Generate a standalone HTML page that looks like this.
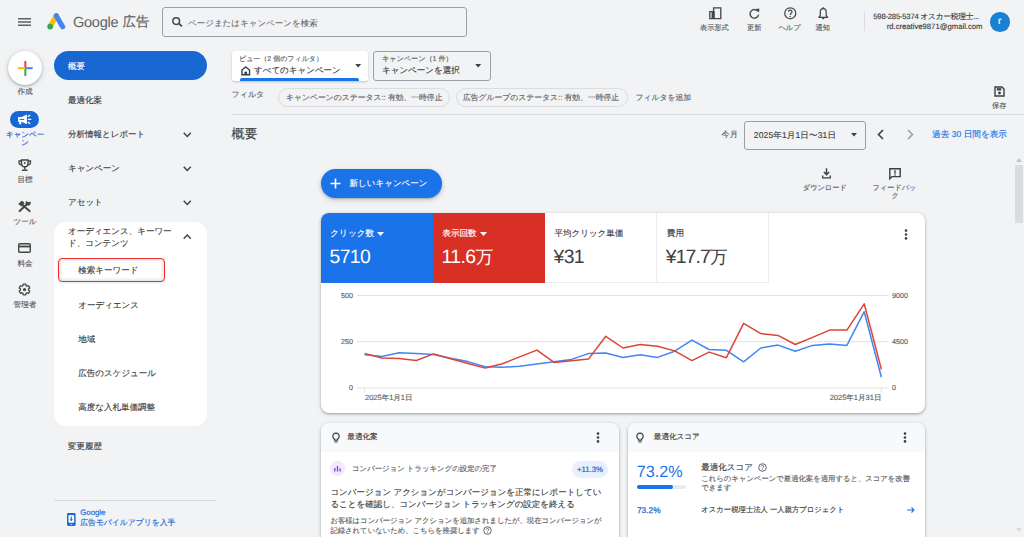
<!DOCTYPE html>
<html><head><meta charset="utf-8">
<style>
*{box-sizing:border-box;margin:0;padding:0}
html,body{width:1024px;height:537px;overflow:hidden;background:#f1f3f4;text-rendering:geometricPrecision;font-family:"Liberation Sans",sans-serif;color:#3c4043}
.a{position:absolute;white-space:nowrap;line-height:1;-webkit-text-stroke:0.15px currentColor}
.rl{font-size:7.6px;color:#5f6368;text-align:center;width:50px;left:0}
.nav{font-size:8.5px;color:#3c4043;left:68px}
.ic{position:absolute;overflow:visible}
.tk{font-size:7.2px;color:#5f6368}
.card{position:absolute;background:#fff;border-radius:8px;box-shadow:0 1px 2px rgba(60,64,67,.3),0 1px 3px 1px rgba(60,64,67,.15)}
</style></head><body>
<!-- ===== top bar ===== -->
<svg class="ic" style="left:18px;top:18px" width="13" height="8" viewBox="0 0 13 8"><rect y="0" width="13" height="1.5" fill="#5f6368"/><rect y="3.25" width="13" height="1.5" fill="#5f6368"/><rect y="6.5" width="13" height="1.5" fill="#5f6368"/></svg>
<svg class="ic" style="left:47px;top:13px" width="19" height="17" viewBox="0 0 19 17"><path d="M9.3 2.8 L3.6 12.6" stroke="#fbbc04" stroke-width="5.2" stroke-linecap="round"/><path d="M9.3 2.8 L15.6 13.8" stroke="#4285f4" stroke-width="5.2" stroke-linecap="round"/><circle cx="3.2" cy="13.6" r="2.9" fill="#34a853"/></svg>
<div class="a" style="-webkit-text-stroke:0;left:73px;top:15.6px;font-size:14.6px;color:#5f6368;letter-spacing:-0.3px">Google</div>
<div class="a" style="left:122.6px;top:14.6px;font-size:13.4px;color:#5f6368">広告</div>
<div class="a" style="left:162px;top:7.4px;width:305px;height:29.3px;border:1px solid #9aa0a6;border-radius:3px"></div>
<svg class="ic" style="left:171.8px;top:16.9px" width="10.5" height="10" viewBox="0 0 10.5 10"><circle cx="4.2" cy="4.1" r="3.35" fill="none" stroke="#444746" stroke-width="1.5"/><path d="M6.7 6.5 L10 9.4" stroke="#444746" stroke-width="1.7"/></svg>
<div class="a" style="left:188px;top:19px;font-size:8.5px;-webkit-text-stroke:0.05px;color:#5f6368">ページまたはキャンペーンを検索</div>

<!-- right icons -->
<svg class="ic" style="left:708.5px;top:7px" width="13" height="12.5" viewBox="0 0 13 12.5"><path d="M0.8 4.6 H4.6 V0.8 H11.8 V11.7 H0.8z" fill="none" stroke="#444746" stroke-width="1.3"/><rect x="2.6" y="4.6" width="2.6" height="7" fill="#444746"/><path d="M5.2 4.6 V11.7" stroke="#444746" stroke-width="1.1"/></svg>
<div class="a tk" style="left:700px;top:23.6px">表示形式</div>
<svg class="ic" style="left:748.8px;top:7.8px" width="11" height="11" viewBox="0 0 11 11"><path d="M8.9 3.4 A4.3 4.3 0 1 0 9.6 6.6" fill="none" stroke="#444746" stroke-width="1.35"/><path d="M6.6 0.9 L10.3 0.6 L10.1 4.4 Z" fill="#444746"/></svg>
<div class="a tk" style="left:747px;top:23.6px">更新</div>
<svg class="ic" style="left:783.6px;top:6.8px" width="12.5" height="12.5" viewBox="0 0 12.5 12.5"><circle cx="6.25" cy="6.25" r="5.5" fill="none" stroke="#444746" stroke-width="1.25"/><path d="M4.5 4.9 A1.75 1.75 0 1 1 7 6.4 C6.4 6.8 6.25 7.1 6.25 7.9" fill="none" stroke="#444746" stroke-width="1.2"/><circle cx="6.25" cy="9.4" r="0.75" fill="#444746"/></svg>
<div class="a tk" style="left:778.5px;top:23.6px">ヘルプ</div>
<svg class="ic" style="left:817.8px;top:7.2px" width="10.5" height="12.5" viewBox="0 0 10.5 12.5"><path d="M5.25 1.6 C3.3 1.6 2.3 3.2 2.3 5 V8.7 L1 10 V10.3 H9.5 V10 L8.2 8.7 V5 C8.2 3.2 7.2 1.6 5.25 1.6z" fill="none" stroke="#444746" stroke-width="1.25" stroke-linejoin="round"/><path d="M4 11.1 A1.25 1.25 0 0 0 6.5 11.1z" fill="#444746"/><rect x="4.6" y="0.2" width="1.3" height="1.6" fill="#444746"/></svg>
<div class="a tk" style="left:815.5px;top:23.6px">通知</div>
<div class="a" style="left:864px;top:12px;width:1px;height:19px;background:#dadce0"></div>
<div class="a" style="left:779px;width:200px;text-align:right;top:13.2px;font-size:7.7px;letter-spacing:-0.22px;color:#3c4043">598-285-5374 オスカー税理士...</div>
<div class="a" style="left:782.5px;width:200px;text-align:right;top:23px;font-size:7.7px;color:#3c4043">rd.creative9871@gmail.com</div>
<div class="a" style="left:990px;top:12px;width:19.5px;height:19.5px;border-radius:50%;background:#1b7fd4;color:#fff;font-size:10px;text-align:center;line-height:19.5px">r</div>

<!-- ===== left rail ===== -->
<div class="a" style="left:8px;top:51px;width:34px;height:34px;border-radius:50%;background:#fff;box-shadow:0 1px 2px rgba(60,64,67,.3),0 1px 4px 1px rgba(60,64,67,.15)"></div>
<svg class="ic" style="left:17.7px;top:60.7px" width="14.7" height="15" viewBox="0 0 14.7 15"><rect x="6.35" y="0" width="2" height="7.4" fill="#ea4335"/><rect x="6.35" y="7.4" width="2" height="7.6" fill="#34a853"/><rect x="0" y="6.2" width="7.35" height="2" fill="#fbbc04"/><rect x="7.35" y="6.2" width="7.35" height="2" fill="#4285f4"/></svg>
<div class="a rl" style="top:87.8px">作成</div>
<div class="a" style="left:10px;top:110.5px;width:29px;height:17px;border-radius:9px;background:#1967d2"></div>
<svg class="ic" style="left:17px;top:114px" width="15" height="11" viewBox="0 0 15 11"><path d="M1 3 H4.6 L9.9 0.6 V10.2 L4.6 7.8 H4.3 V10.3 H2.2 V7.8 H1z" fill="#fff"/><path d="M2.6 5.4 H7.2" stroke="#1967d2" stroke-width="1"/><path d="M11.2 2.6 L12.9 1.3 M11.4 5.4 H13.8 M11.2 8.2 L12.9 9.5" stroke="#fff" stroke-width="1.2" stroke-linecap="round"/></svg>
<div class="a rl" style="top:130.8px;color:#1967d2;white-space:normal;line-height:8px;width:50px;padding:0 5px">キャンペーン</div>
<svg class="ic" style="left:18px;top:159px" width="13.5" height="12" viewBox="0 0 13.5 12"><path d="M3.5 1 H10 V4.5 A3.25 3.25 0 0 1 3.5 4.5z" fill="none" stroke="#444746" stroke-width="1.4"/><path d="M3.5 2 H1 V3.5 A2.5 2.5 0 0 0 3.6 5.8 M10 2 H12.5 V3.5 A2.5 2.5 0 0 1 9.9 5.8" fill="none" stroke="#444746" stroke-width="1.3"/><path d="M6.75 7.8 V10.3 M4 11.2 H9.5" stroke="#444746" stroke-width="1.4"/><circle cx="6.75" cy="4" r="0.9" fill="#444746"/></svg>
<div class="a rl" style="top:176px">目標</div>
<svg class="ic" style="left:17px;top:200px" width="14" height="12" viewBox="0 0 14 12"><path d="M11.3 3 L2.6 11.1" stroke="#444746" stroke-width="2" stroke-linecap="round"/><path d="M6.3 5.8 L12.6 11.1" stroke="#444746" stroke-width="2" stroke-linecap="round"/><path d="M1.2 4 L4.6 0.7 L6.2 1.4 L7.6 3.4 L4.6 6.6z" fill="#444746"/><path d="M13 1.3 A2.5 2.5 0 1 1 9.7 1 L11.2 2.6 L12.3 2.4z" fill="#444746"/></svg>
<div class="a rl" style="top:218px">ツール</div>
<svg class="ic" style="left:18px;top:243px" width="13" height="10" viewBox="0 0 13 10"><rect x="0.7" y="0.7" width="11.6" height="8.6" rx="1" fill="none" stroke="#444746" stroke-width="1.4"/><rect x="0.7" y="2.6" width="11.6" height="1.8" fill="#444746"/></svg>
<div class="a rl" style="top:259.5px">料金</div>
<svg class="ic" style="left:18px;top:283px" width="13" height="13" viewBox="0 0 24 24"><path d="M19.4 13c.04-.3.06-.65.06-1s-.02-.7-.06-1l2.1-1.65c.2-.15.25-.42.13-.64l-2-3.46c-.12-.22-.39-.3-.61-.22l-2.49 1c-.52-.4-1.08-.73-1.69-.98l-.38-2.65C14.46 2.18 14.25 2 14 2h-4c-.25 0-.46.18-.49.42l-.38 2.65c-.61.25-1.17.59-1.69.98l-2.49-1c-.23-.09-.49 0-.61.22l-2 3.46c-.13.22-.07.49.12.64L4.57 11c-.04.32-.07.66-.07 1s.03.68.07 1l-2.11 1.65c-.19.15-.24.42-.12.64l2 3.46c.12.22.39.3.61.22l2.49-1c.52.4 1.08.73 1.69.98l.38 2.65c.03.24.24.42.49.42h4c.25 0 .46-.18.49-.42l.38-2.65c.61-.25 1.17-.59 1.69-.98l2.49 1c.23.09.49 0 .61-.22l2-3.46c.12-.22.07-.49-.12-.64L19.4 13z" fill="none" stroke="#444746" stroke-width="2.4"/><circle cx="12" cy="12" r="3" fill="#444746"/></svg>
<div class="a rl" style="top:300.5px">管理者</div>

<!-- ===== nav ===== -->
<div class="a" style="left:54px;top:51px;width:153px;height:29.4px;border-radius:15px;background:#1967d2"></div>
<div class="a nav" style="top:61.9px;color:#fff">概要</div>
<div class="a nav" style="top:95.9px">最適化案</div>
<div class="a nav" style="top:130.0px">分析情報とレポート</div>
<svg class="ic" style="left:182.5px;top:131.5px" width="8.5" height="5.5" viewBox="0 0 8.5 5.5"><path d="M0.7 0.7 L4.25 4.4 L7.8 0.7" fill="none" stroke="#3c4043" stroke-width="1.4"/></svg>
<div class="a nav" style="top:164.4px">キャンペーン</div>
<svg class="ic" style="left:182.5px;top:165.7px" width="8.5" height="5.5" viewBox="0 0 8.5 5.5"><path d="M0.7 0.7 L4.25 4.4 L7.8 0.7" fill="none" stroke="#3c4043" stroke-width="1.4"/></svg>
<div class="a nav" style="top:198.2px">アセット</div>
<svg class="ic" style="left:182.5px;top:199.5px" width="8.5" height="5.5" viewBox="0 0 8.5 5.5"><path d="M0.7 0.7 L4.25 4.4 L7.8 0.7" fill="none" stroke="#3c4043" stroke-width="1.4"/></svg>
<div class="a" style="left:54px;top:222px;width:153px;height:204px;border-radius:12px;background:#fff"></div>
<div class="a nav" style="top:224.5px;line-height:12px">オーディエンス、キーワー<br>ド、コンテンツ</div>
<svg class="ic" style="left:182.5px;top:233.8px" width="8.5" height="5.5" viewBox="0 0 8.5 5.5"><path d="M0.7 4.8 L4.25 1.1 L7.8 4.8" fill="none" stroke="#3c4043" stroke-width="1.4"/></svg>
<div class="a" style="left:57.8px;top:258.2px;width:107.5px;height:23.6px;border:1.8px solid #e8312f;border-radius:4px;box-shadow:inset 0 0 4px rgba(0,0,0,.22),0 1px 2px rgba(0,0,0,.1)"></div>
<div class="a nav" style="left:78.3px;top:266.2px">検索キーワード</div>
<div class="a nav" style="left:78.3px;top:301.0px">オーディエンス</div>
<div class="a nav" style="left:78.3px;top:335.1px">地域</div>
<div class="a nav" style="left:78.3px;top:368.6px">広告のスケジュール</div>
<div class="a nav" style="left:78.3px;top:402.9px">高度な入札単価調整</div>
<div class="a nav" style="top:442.1px">変更履歴</div>
<div class="a" style="left:54px;top:500px;width:162px;height:1px;background:#dadce0"></div>
<svg class="ic" style="left:66.5px;top:512.7px" width="8.6" height="13" viewBox="0 0 8.6 13"><rect x="0" y="0" width="8.6" height="13" rx="1.4" fill="#1967d2"/><rect x="1.5" y="2.1" width="5.6" height="7.6" fill="#fff"/><rect x="3.3" y="11" width="2" height="0.7" fill="#fff"/><path d="M4.3 3.6 V7.6" stroke="#1967d2" stroke-width="1.1"/><path d="M2.6 6.2 L4.3 8.2 L6 6.2z" fill="#1967d2"/></svg>
<div class="a" style="left:80.3px;top:509.3px;font-size:7.8px;color:#1967d2">Google</div>
<div class="a" style="left:80.3px;top:519.4px;font-size:7.8px;color:#1967d2">広告モバイルアプリを入手</div>

<!-- MAIN -->
<!-- view selectors -->
<div class="a" style="left:231.5px;top:51px;width:136px;height:29.5px;background:#fff;border-radius:3px;box-shadow:0 1px 2px rgba(60,64,67,.25)"></div>
<div class="a" style="left:239px;top:56.2px;font-size:7px;color:#5f6368">ビュー（2 個のフィルタ）</div>
<svg class="ic" style="left:240.5px;top:66px" width="9.5" height="9.5" viewBox="0 0 10 10"><path d="M1 9.2 V4.2 L5 1 L9 4.2 V9.2 Z" fill="none" stroke="#3c4043" stroke-width="1.5"/><rect x="3.6" y="6" width="2.8" height="3.4" fill="#3c4043"/></svg>
<div class="a" style="left:254px;top:66.3px;font-size:8.5px;color:#3c4043">すべてのキャンペーン</div>
<div class="a" style="left:240px;top:77.6px;width:119px;height:3px;background:#1a73e8;border-radius:2px 2px 0 0"></div>
<svg class="ic" style="left:354.6px;top:64px" width="6.4" height="3.4" viewBox="0 0 7 4"><path d="M0 0 H7 L3.5 4z" fill="#3c4043"/></svg>
<div class="a" style="left:372.5px;top:51px;width:118.5px;height:29.5px;border:1px solid #9aa0a6;border-radius:3px"></div>
<div class="a" style="left:382px;top:56.2px;font-size:7.1px;color:#5f6368">キャンペーン（1 件）</div>
<div class="a" style="left:382px;top:66.3px;font-size:8.5px;color:#3c4043">キャンペーンを選択</div>
<svg class="ic" style="left:474.6px;top:64px" width="6.4" height="3.4" viewBox="0 0 7 4"><path d="M0 0 H7 L3.5 4z" fill="#3c4043"/></svg>

<!-- filter row -->
<div class="a" style="left:231.5px;top:91.2px;font-size:8px;color:#5f6368">フィルタ</div>
<div class="a" style="left:278px;top:87.8px;width:172px;height:19px;border:1px solid #dadce0;border-radius:10px"></div>
<div class="a" style="left:286px;top:93.8px;font-size:7.8px;color:#5f6368">キャンペーンのステータス:: 有効、一時停止</div>
<div class="a" style="left:455.5px;top:87.8px;width:172.5px;height:19px;border:1px solid #dadce0;border-radius:10px"></div>
<div class="a" style="left:463px;top:93.8px;font-size:7.8px;color:#5f6368">広告グループのステータス:: 有効、一時停止</div>
<div class="a" style="left:635.5px;top:93.8px;font-size:7.8px;color:#5f6368">フィルタを追加</div>
<svg class="ic" style="left:993.5px;top:86px" width="11" height="11" viewBox="0 0 11 11"><path d="M1 1 H8 L10 3 V10 H1z" fill="none" stroke="#3c4043" stroke-width="1.4"/><rect x="2.8" y="2.2" width="4.5" height="2.2" fill="#3c4043"/><circle cx="5.5" cy="7" r="1.4" fill="#3c4043"/></svg>
<div class="a tk" style="left:992px;top:102px">保存</div>
<div class="a" style="left:231px;top:113.5px;width:793px;height:1px;background:#dadce0"></div>

<!-- heading row -->
<div class="a" style="left:231.5px;top:127px;font-size:13px;color:#3c4043">概要</div>
<div class="a" style="left:721.5px;top:130.9px;font-size:8.2px;color:#5f6368">今月</div>
<div class="a" style="left:743.5px;top:120.5px;width:122.5px;height:29px;border:1px solid #9aa0a6;border-radius:3px"></div>
<div class="a" style="left:753.8px;top:130.5px;font-size:8.5px;letter-spacing:0.15px;color:#3c4043">2025年1月1日〜31日</div>
<svg class="ic" style="left:851px;top:132.8px" width="6" height="3.4" viewBox="0 0 7 4"><path d="M0 0 H7 L3.5 4z" fill="#3c4043"/></svg>
<svg class="ic" style="left:877px;top:129px" width="7" height="11" viewBox="0 0 7 11"><path d="M6 1 L1.5 5.5 L6 10" fill="none" stroke="#3c4043" stroke-width="1.6"/></svg>
<svg class="ic" style="left:907px;top:129px" width="7" height="11" viewBox="0 0 7 11"><path d="M1 1 L5.5 5.5 L1 10" fill="none" stroke="#9aa0a6" stroke-width="1.6"/></svg>
<div class="a" style="left:932px;top:130.2px;font-size:8.65px;color:#1a73e8">過去 30 日間を表示</div>

<!-- scrollbar -->
<svg class="ic" style="left:1016px;top:157.5px" width="6" height="4" viewBox="0 0 6 4"><path d="M0 4 H6 L3 0z" fill="#c4c7c5"/></svg>
<div class="a" style="left:1015px;top:164.7px;width:8px;height:58px;background:#dadce0"></div>
<svg class="ic" style="left:1016px;top:528px" width="6" height="4" viewBox="0 0 6 4"><path d="M0 0 H6 L3 4z" fill="#dadce0"/></svg>

<!-- download/feedback -->
<svg class="ic" style="left:821.5px;top:168.3px" width="9" height="10.5" viewBox="0 0 9 10.5"><path d="M4.5 0.3 V6.6 M1.9 4.1 L4.5 6.7 L7.1 4.1" fill="none" stroke="#3c4043" stroke-width="1.4"/><path d="M0.7 7.6 V9.8 H8.3 V7.6" fill="none" stroke="#3c4043" stroke-width="1.3"/></svg>
<div class="a tk" style="left:802.8px;top:183.8px">ダウンロード</div>
<svg class="ic" style="left:889px;top:167.5px" width="12" height="12" viewBox="0 0 12 12"><path d="M0.8 0.8 H11.2 V8.6 H3 L0.8 10.8z" fill="none" stroke="#3c4043" stroke-width="1.4"/><rect x="5.3" y="2.3" width="1.4" height="3.3" fill="#3c4043"/><rect x="5.3" y="6.3" width="1.4" height="1.3" fill="#3c4043"/></svg>
<div class="a tk" style="left:872.5px;top:184px">フィードバッ</div>
<div class="a tk" style="left:891.5px;top:192.4px">ク</div>

<!-- new campaign button -->
<div class="a" style="left:320.5px;top:169px;width:121px;height:29px;border-radius:15px;background:#1a73e8;box-shadow:0 1px 2px rgba(60,64,67,.3),0 2px 4px 1px rgba(60,64,67,.15)"></div>
<svg class="ic" style="left:330px;top:178.3px" width="11" height="11" viewBox="0 0 11 11"><path d="M5.5 0.5 V10.5 M0.5 5.5 H10.5" stroke="#fff" stroke-width="1.6"/></svg>
<div class="a" style="left:349.6px;top:179.2px;font-size:8.5px;color:#fff">新しいキャンペーン</div>

<!-- main card -->
<div class="card" style="left:320.5px;top:212.5px;width:604.5px;height:200px"></div>
<div class="a" style="left:320.5px;top:212.5px;width:112px;height:70.5px;background:#1a73e8;border-top-left-radius:8px"></div>
<div class="a" style="left:432.5px;top:212.5px;width:112.5px;height:70.5px;background:#d93025"></div>
<div class="a" style="left:545px;top:212.5px;width:111.5px;height:70.5px;border-right:1px solid #e8eaed;border-bottom:1px solid #e8eaed"></div>
<div class="a" style="left:656.5px;top:212.5px;width:112.5px;height:70.5px;border-right:1px solid #e8eaed;border-bottom:1px solid #e8eaed"></div>
<div class="a" style="left:330.3px;top:228.7px;font-size:8.6px;color:#fff">クリック数</div>
<svg class="ic" style="left:377px;top:231.6px" width="7" height="4" viewBox="0 0 7 4"><path d="M0 0 H7 L3.5 4z" fill="#fff"/></svg>
<div class="a" style="left:329.5px;top:247.7px;-webkit-text-stroke:0;font-size:19.4px;letter-spacing:-0.6px;color:#fff">5710</div>
<div class="a" style="left:442.3px;top:228.7px;font-size:8.6px;color:#fff">表示回数</div>
<svg class="ic" style="left:480px;top:231.6px" width="7" height="4" viewBox="0 0 7 4"><path d="M0 0 H7 L3.5 4z" fill="#fff"/></svg>
<div class="a" style="left:441.5px;top:247.7px;-webkit-text-stroke:0;font-size:19.4px;letter-spacing:-0.6px;color:#fff">11.6<span style="font-size:17.8px">万</span></div>
<div class="a" style="left:554.5px;top:228.7px;font-size:8.5px;color:#3c4043">平均クリック単価</div>
<div class="a" style="left:553.5px;top:247.7px;-webkit-text-stroke:0;font-size:19.4px;letter-spacing:-0.6px;color:#3c4043">¥31</div>
<div class="a" style="left:666.8px;top:228.7px;font-size:8.6px;color:#3c4043">費用</div>
<div class="a" style="left:665.8px;top:247.7px;-webkit-text-stroke:0;font-size:19.4px;letter-spacing:-0.6px;color:#3c4043;letter-spacing:-0.9px">¥17.7<span style="font-size:17.8px">万</span></div>
<svg class="ic" style="left:903.5px;top:229px" width="4" height="11" viewBox="0 0 4 11"><circle cx="2" cy="1.6" r="1.3" fill="#3c4043"/><circle cx="2" cy="5.5" r="1.3" fill="#3c4043"/><circle cx="2" cy="9.4" r="1.3" fill="#3c4043"/></svg>

<!-- chart -->
<svg class="ic" style="left:0;top:0" width="1024" height="537" viewBox="0 0 1024 537">
<g stroke="#e0e0e0" stroke-width="1"><path d="M357 295.5 H888.5"/><path d="M357 341.7 H888.5"/><path d="M357 388 H888.5"/><path d="M364.6 388 V393"/><path d="M881.4 388 V393"/></g>
<polyline fill="none" stroke="#4285f4" stroke-width="1.5" stroke-linejoin="round" points="364.6,354.7 381.8,356.6 399.1,352.8 416.3,353.6 433.5,354.5 450.7,358.3 468.0,361.6 485.2,366.8 502.4,367.3 519.6,366.2 536.9,364.0 554.1,361.8 571.3,359.4 588.5,353.6 605.8,353.0 623.0,357.4 640.2,354.7 657.5,357.4 674.7,351.2 691.9,340.1 709.1,349.5 726.4,350.3 743.6,361.8 760.8,348.0 778.0,345.1 795.3,351.2 812.5,345.4 829.7,343.9 846.9,345.4 864.2,311.7 881.4,377.3"/>
<polyline fill="none" stroke="#db4437" stroke-width="1.5" stroke-linejoin="round" points="364.6,353.4 381.8,358.0 399.1,358.6 416.3,360.5 433.5,353.9 450.7,358.8 468.0,363.5 485.2,368.1 502.4,363.8 519.6,356.9 536.9,350.1 554.1,362.4 571.3,360.7 588.5,359.1 605.8,336.3 623.0,348.0 640.2,344.5 657.5,346.2 674.7,350.9 691.9,360.6 709.1,352.1 726.4,357.7 743.6,323.4 760.8,333.6 778.0,335.4 795.3,344.5 812.5,337.4 829.7,330.1 846.9,330.1 864.2,303.8 881.4,369.4"/>
</svg>
<div class="a" style="left:323px;top:291.7px;width:30px;text-align:right;font-size:7.2px;color:#5f6368">500</div>
<div class="a" style="left:323px;top:337.9px;width:30px;text-align:right;font-size:7.2px;color:#5f6368">250</div>
<div class="a" style="left:323px;top:384.2px;width:30px;text-align:right;font-size:7.2px;color:#5f6368">0</div>
<div class="a" style="left:892px;top:291.7px;font-size:7.2px;color:#5f6368">9000</div>
<div class="a" style="left:892px;top:337.9px;font-size:7.2px;color:#5f6368">4500</div>
<div class="a" style="left:892px;top:384.2px;font-size:7.2px;color:#5f6368">0</div>
<div class="a" style="left:365px;top:394px;font-size:7.5px;color:#5f6368">2025年1月1日</div>
<div class="a" style="left:781.4px;width:100px;text-align:right;top:394px;font-size:7.5px;color:#5f6368">2025年1月31日</div>

<!-- bottom cards -->
<div class="card" style="left:320.5px;top:422.5px;width:298px;height:130px;overflow:hidden">
  <div style="position:absolute;left:0;top:0;width:100%;height:29.3px;background:#f8f9fa"></div>
</div>
<svg class="ic" style="left:332.3px;top:432.6px" width="8" height="9.6" viewBox="0 0 8 9.6"><path d="M2.5 7.2 V6.1 A3.2 3.2 0 1 1 5.5 6.1 V7.2 Z" fill="none" stroke="#3c4043" stroke-width="1.2" stroke-linejoin="round"/><rect x="2.4" y="8.4" width="3.2" height="1.1" fill="#3c4043"/></svg>
<div class="a" style="left:347.3px;top:433px;font-size:7.6px;color:#3c4043">最適化案</div>
<svg class="ic" style="left:596px;top:431.5px" width="4" height="11" viewBox="0 0 4 11"><circle cx="2" cy="1.6" r="1.3" fill="#3c4043"/><circle cx="2" cy="5.5" r="1.3" fill="#3c4043"/><circle cx="2" cy="9.4" r="1.3" fill="#3c4043"/></svg>
<div class="a" style="left:330px;top:461.2px;width:15px;height:14.8px;border-radius:50%;background:#f3e8fd"></div>
<svg class="ic" style="left:334.3px;top:466.3px" width="7" height="5.5" viewBox="0 0 7 5.5"><rect x="0.2" y="2" width="1.3" height="3.5" fill="#9334e6"/><rect x="2.85" y="0" width="1.3" height="5.5" fill="#9334e6"/><rect x="5.5" y="2.5" width="1.3" height="3" fill="#9334e6"/></svg>
<div class="a" style="left:352px;top:465.4px;font-size:7.4px;color:#5f6368">コンバージョン トラッキングの設定の完了</div>
<div class="a" style="left:572px;top:460.5px;width:36px;height:17px;border-radius:9px;background:#e8f0fe;color:#1967d2;font-size:7.8px;-webkit-text-stroke:0.2px #1967d2;text-align:center;line-height:17px">+11.3%</div>
<div class="a" style="left:330.4px;top:485.7px;font-size:8.5px;line-height:12.3px;color:#3c4043">コンバージョン アクションがコンバージョンを正常にレポートしてい<br>ることを確認し、コンバージョン トラッキングの設定を終える</div>
<div class="a" style="left:330.4px;top:516.3px;font-size:7.35px;line-height:9.8px;color:#5f6368">お客様はコンバージョン アクションを追加されましたが、現在コンバージョンが<br>記録されていないため、こちらを推奨します</div>
<svg class="ic" style="left:482.5px;top:525.5px" width="9" height="9" viewBox="0 0 9 9"><circle cx="4.5" cy="4.5" r="3.8" fill="none" stroke="#5f6368" stroke-width="1"/><path d="M3.3 3.5 A1.2 1.2 0 1 1 5 4.6 C4.6 4.9 4.5 5.1 4.5 5.6" fill="none" stroke="#5f6368" stroke-width="0.9"/><circle cx="4.5" cy="6.7" r="0.5" fill="#5f6368"/></svg>

<div class="card" style="left:628.2px;top:422.5px;width:296.5px;height:130px;overflow:hidden">
  <div style="position:absolute;left:0;top:0;width:100%;height:29px;background:#f8f9fa"></div>
</div>
<svg class="ic" style="left:636.3px;top:432.6px" width="8" height="9.6" viewBox="0 0 8 9.6"><path d="M2.5 7.2 V6.1 A3.2 3.2 0 1 1 5.5 6.1 V7.2 Z" fill="none" stroke="#3c4043" stroke-width="1.2" stroke-linejoin="round"/><rect x="2.4" y="8.4" width="3.2" height="1.1" fill="#3c4043"/></svg>
<div class="a" style="left:653.8px;top:433px;font-size:7.6px;color:#3c4043">最適化スコア</div>
<svg class="ic" style="left:903.4px;top:431.5px" width="4" height="11" viewBox="0 0 4 11"><circle cx="2" cy="1.6" r="1.3" fill="#3c4043"/><circle cx="2" cy="5.5" r="1.3" fill="#3c4043"/><circle cx="2" cy="9.4" r="1.3" fill="#3c4043"/></svg>
<div class="a" style="left:636.8px;top:463.8px;font-size:16.2px;-webkit-text-stroke:0;color:#1a73e8">73.2%</div>
<div class="a" style="left:637px;top:484.5px;width:48.7px;height:4.4px;border-radius:3px;background:#e8eaed"></div>
<div class="a" style="left:637px;top:484.5px;width:36px;height:4.4px;border-radius:3px;background:#1a73e8"></div>
<div class="a" style="left:701.3px;top:462.7px;font-size:8.5px;color:#3c4043">最適化スコア</div>
<svg class="ic" style="left:758.3px;top:462.5px" width="9" height="9" viewBox="0 0 9 9"><circle cx="4.5" cy="4.5" r="3.8" fill="none" stroke="#5f6368" stroke-width="1"/><path d="M3.3 3.5 A1.2 1.2 0 1 1 5 4.6 C4.6 4.9 4.5 5.1 4.5 5.6" fill="none" stroke="#5f6368" stroke-width="0.9"/><circle cx="4.5" cy="6.7" r="0.5" fill="#5f6368"/></svg>
<div class="a" style="left:701.3px;top:473.6px;font-size:7.35px;line-height:9.8px;color:#5f6368">これらのキャンペーンで最適化案を適用すると、スコアを改善<br>できます</div>
<div class="a" style="left:637px;top:505.6px;font-size:8.3px;-webkit-text-stroke:0.25px #1967d2;color:#1967d2">73.2%</div>
<div class="a" style="left:701.3px;top:506.1px;font-size:7.35px;color:#3c4043">オスカー税理士法人 一人親方プロジェクト</div>
<svg class="ic" style="left:907px;top:506.5px" width="8" height="6" viewBox="0 0 8 6"><path d="M0 3 H7 M4.5 0.5 L7 3 L4.5 5.5" fill="none" stroke="#1a73e8" stroke-width="1.1"/></svg>

</body></html>
